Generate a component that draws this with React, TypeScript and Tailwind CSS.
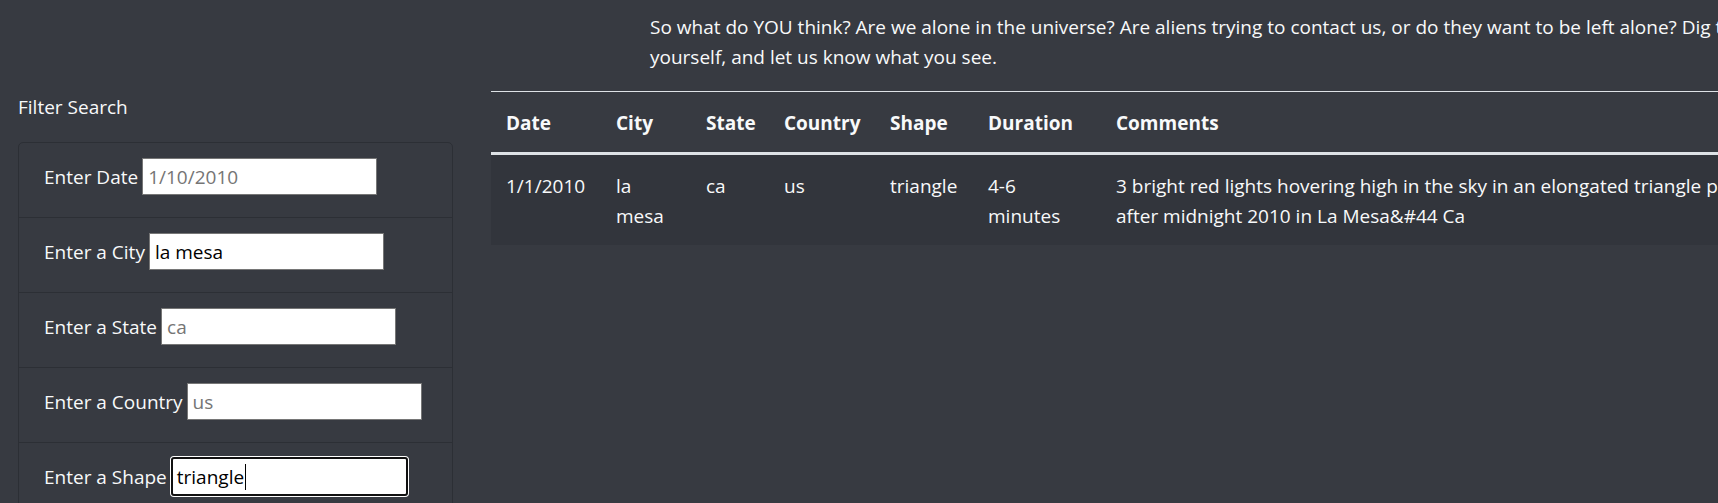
import React from "react";

type Sighting = {
  date: string;
  city: string;
  state: string;
  country: string;
  shape: string;
  duration: string;
  comments: string[];
};

const SIGHTINGS: Sighting[] = [
  {
    date: "1/1/2010",
    city: "la mesa",
    state: "ca",
    country: "us",
    shape: "triangle",
    duration: "4-6 minutes",
    comments: [
      "3 bright red lights hovering high in the sky in an elongated triangle pattern shortly",
      "after midnight 2010 in La Mesa&#44 Ca",
    ],
  },
];

const FILTERS = [
  { id: "datetime", label: "Enter Date", placeholder: "1/10/2010" },
  { id: "city", label: "Enter a City", value: "la mesa" },
  { id: "state", label: "Enter a State", placeholder: "ca" },
  { id: "country", label: "Enter a Country", placeholder: "us" },
  { id: "shape", label: "Enter a Shape", value: "triangle", focused: true },
];

const COLUMNS = [
  { key: "date", label: "Date", width: "w-[110px]" },
  { key: "city", label: "City", width: "w-[90px]" },
  { key: "state", label: "State", width: "w-[78px]" },
  { key: "country", label: "Country", width: "w-[106px]" },
  { key: "shape", label: "Shape", width: "w-[98px]" },
  { key: "duration", label: "Duration", width: "w-[128px]" },
  { key: "comments", label: "Comments", width: "" },
];

function FilterRow({ filter }: { filter: (typeof FILTERS)[number] }) {
  return (
    <li className="flex items-center gap-[4px] border-b border-[#2c2f35] px-[25px] pt-[15px] pb-[22px] last:border-b-0">
      <label htmlFor={filter.id} className="pt-px whitespace-nowrap">
        {filter.label}
      </label>
      {filter.focused ? (
        <div
          id={filter.id}
          className="-my-px flex h-[39px] w-[237px] items-center rounded-[3px] border-2 border-[#111] bg-white pl-[4px] text-black shadow-[0_0_0_1px_#ffffff]"
        >
          <span>{filter.value}</span>
          <span className="ml-px h-[26px] w-px bg-black" />
        </div>
      ) : (
        <input
          id={filter.id}
          readOnly
          defaultValue={filter.value}
          placeholder={filter.placeholder}
          className="h-[37px] w-[235px] border border-[#767676] bg-white px-[5px] text-black outline-none placeholder:text-[#757575]"
        />
      )}
    </li>
  );
}

export default function App() {
  return (
    <div
      className="h-[503px] w-[1718px] overflow-hidden bg-[#373a41] text-[19px] leading-[30px] text-[#f8f9fa]"
      style={{ fontFamily: '"Open Sans", "Noto Sans", sans-serif' }}
    >
      {/* Intro text */}
      <p className="mb-[19px] pt-[12px] pl-[650px] whitespace-nowrap">
        So what do YOU think? Are we alone in the universe? Are aliens trying to contact us, or do they want to be left alone? Dig through the data
        <br />
        yourself, and let us know what you see.
      </p>

      <div className="flex">
        {/* Filters */}
        <aside className="w-[472px] shrink-0 px-[18px]">
          <h5 className="mb-[21px] pt-px">Filter Search</h5>
          <ul className="-mt-px w-[435px] rounded-[5px] border border-[#2c2f35]">
            {FILTERS.map((f) => (
              <FilterRow key={f.id} filter={f} />
            ))}
          </ul>
        </aside>

        {/* Results table */}
        <main className="shrink-0 pl-[19px]">
          <table className="w-[1400px] table-fixed border-collapse text-left">
            <thead>
              <tr className="border-t border-b-[3px] border-t-[#dee2e6] border-b-[#dee2e6]">
                {COLUMNS.map((c) => (
                  <th key={c.key} className={`${c.width} pt-[16px] pb-[14px] px-[15px] align-top font-bold`}>
                    {c.label}
                  </th>
                ))}
              </tr>
            </thead>
            <tbody>
              {SIGHTINGS.map((s, i) => (
                <tr key={i} className="bg-[#32353c]">
                  <td className="pt-[16px] pb-[14px] px-[15px] align-top">{s.date}</td>
                  <td className="pt-[16px] pb-[14px] px-[15px] align-top">{s.city}</td>
                  <td className="pt-[16px] pb-[14px] px-[15px] align-top">{s.state}</td>
                  <td className="pt-[16px] pb-[14px] px-[15px] align-top">{s.country}</td>
                  <td className="pt-[16px] pb-[14px] px-[15px] align-top">{s.shape}</td>
                  <td className="pt-[16px] pb-[14px] px-[15px] align-top">{s.duration}</td>
                  <td className="pt-[16px] pb-[14px] px-[15px] align-top whitespace-nowrap">
                    {s.comments[0]}
                    <br />
                    {s.comments[1]}
                  </td>
                </tr>
              ))}
            </tbody>
          </table>
        </main>
      </div>
    </div>
  );
}
